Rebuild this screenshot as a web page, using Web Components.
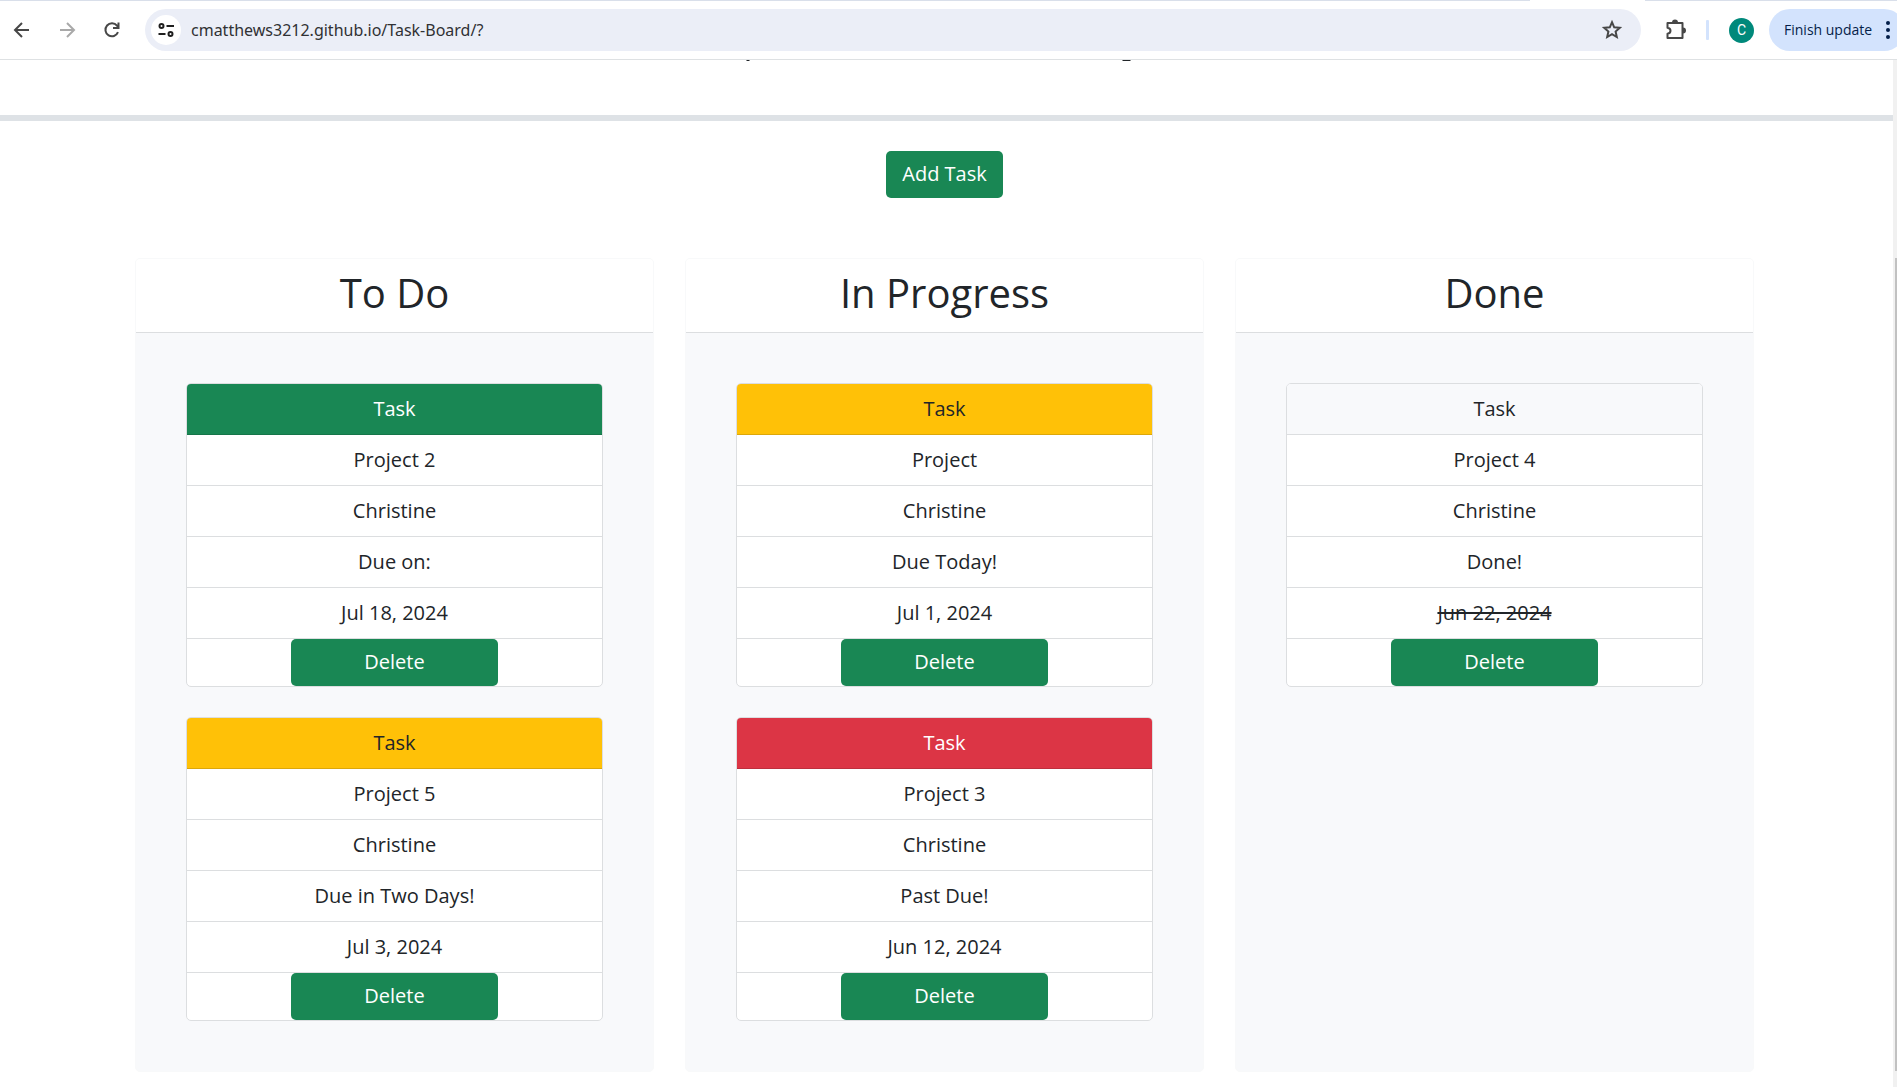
<!DOCTYPE html>
<html lang="en">
<head>
<meta charset="utf-8">
<title>Task Board</title>
<style>
  html, body { margin: 0; height: 100%; }
  body {
    display: flex; flex-direction: column; overflow: hidden; background: #fff; color: #212529;
    font: 20px/30px "Open Sans", "Noto Sans", sans-serif;
  }
</style>
</head>
<body>
<browser-bar url="cmatthews3212.github.io/Task-Board/?"></browser-bar>
<page-view>
  <board-header></board-header>
  <task-board>
    <task-lane heading="To Do">
      <task-card tone="success" name="Project 2" owner="Christine" status="Due on:" due="Jul 18, 2024"></task-card>
      <task-card tone="warning" name="Project 5" owner="Christine" status="Due in Two Days!" due="Jul 3, 2024"></task-card>
    </task-lane>
    <task-lane heading="In Progress">
      <task-card tone="warning" name="Project" owner="Christine" status="Due Today!" due="Jul 1, 2024"></task-card>
      <task-card tone="danger" name="Project 3" owner="Christine" status="Past Due!" due="Jun 12, 2024"></task-card>
    </task-lane>
    <task-lane heading="Done">
      <task-card tone="light" name="Project 4" owner="Christine" status="Done!" due="Jun 22, 2024"></task-card>
    </task-lane>
  </task-board>
</page-view>
<script>
  class Base extends HTMLElement {
    connectedCallback() {
      if (this.shadowRoot) return;
      this.attachShadow({ mode: 'open' }).innerHTML =
        `<style>*{box-sizing:border-box}button,input{font:inherit;border:0;margin:0}${this.css()}</style>${this.html()}`;
    }
    at(name) { return this.getAttribute(name) || ''; }
  }

  customElements.define('browser-bar', class extends Base {
    css() { return `
      :host { display: block; flex: none; overflow: hidden; border-bottom: 1px solid #dee1e3; }
      .tabs { display: grid; grid-template-columns: 1530fr 115fr 252fr; height: 1px; }
      .tabs i { background: #d9dfea; }
      .tabs i:nth-child(2) { background: #fff; }
      .bar { display: flex; align-items: center; height: 58px; padding-left: 10px; }
      button { background: none; padding: 0; flex: none; display: flex; align-items: center; justify-content: center; }
      svg { display: block; flex: none; }
      .nav { width: 24px; height: 24px; margin-right: 21px; color: #474747; }
      .nav.off { color: #a9a9a9; }
      .omni { flex: 1; min-width: 0; height: 42px; border-radius: 21px; background: #ebeef7; display: flex; align-items: center; padding: 0 18px 0 6px; }
      .site { width: 30px; height: 30px; border-radius: 50%; background: #fff; color: #1f1f1f; }
      input { flex: 1; min-width: 0; background: none; outline: 0; color: #303134; padding: 0 0 0 10px; font: 16px/24px "Noto Sans", sans-serif; }
      .star { color: #474747; }
      .ext { margin-left: 23px; color: #474747; }
      .sep { width: 3px; height: 20px; border-radius: 1px; background: #d3e3fd; margin: 0 20px; flex: none; }
      .me { width: 25px; height: 25px; border-radius: 50%; background: #00897b; color: #fff; font: 14px/25px Roboto, sans-serif; }
      .upd { margin: 0 -8px 0 15px; width: 136px; height: 42px; border-radius: 21px; background: #d3e3fd; color: #041e49; font-size: 14px; justify-content: space-between; padding: 0 15px; }
      `; }
    html() { return `
      <div class="tabs"><i></i><i></i><i></i></div>
      <div class="bar">
        <button class="nav" aria-label="Back"><svg width="24" height="24" fill="none" stroke="currentColor" stroke-width="2"><path d="M19 12H6M12 5l-7 7 7 7"/></svg></button>
        <button class="nav off" aria-label="Forward"><svg width="24" height="24" fill="none" stroke="currentColor" stroke-width="2"><path d="M5 12h13M12 5l7 7-7 7"/></svg></button>
        <button class="nav" aria-label="Reload"><svg width="24" height="24" fill="none" stroke="currentColor" stroke-width="2"><path d="M18 14.2A6.5 6.5 0 1 1 17 7.7L18.5 9.6M18.5 4.5v5.5H13"/></svg></button>
        <div class="omni">
          <button class="site" aria-label="View site information"><svg width="18" height="18" fill="none" stroke="currentColor" stroke-width="2"><circle cx="4.5" cy="5" r="2"/><path d="M9.5 5H17M1.500 13H8.500"/><circle cx="13.500" cy="13" r="2"/></svg></button>
          <input aria-label="Address" value="${this.at('url')}">
          <button class="star" aria-label="Bookmark this tab"><svg width="22" height="22" fill="none" stroke="currentColor" stroke-width="2"><path d="M11 3.200l2.200 5.100 5.600.5-4.200 3.700 1.200 5.500-4.800-2.900-4.800 2.900 1.200-5.500-4.200-3.700 5.600-.5z"/></svg></button>
        </div>
        <button class="ext" aria-label="Extensions"><svg width="22" height="22"><path fill="none" stroke="currentColor" stroke-width="2" stroke-linejoin="round" d="M3.500 4h15v15h-15v-4.200c4-.6 4-5.400 0-6z"/><path fill="currentColor" d="M8 3.500a3 3 0 0 1 6 0zM19 8.500a3 3 0 0 1 0 6z"/></svg></button>
        <span class="sep"></span>
        <button class="me" aria-label="Profile">C</button>
        <button class="upd"><span>Finish update</span><svg width="4" height="20" fill="currentColor"><circle cx="2" cy="3" r="2"/><circle cx="2" cy="10" r="2"/><circle cx="2" cy="17" r="2"/></svg></button>
      </div>`; }
  });

  customElements.define('page-view', class extends Base {
    css() { return `
      :host { display: flex; flex: 1; min-height: 0; }
      main { flex: 1; min-width: 0; overflow: hidden; }
      .track { width: 4px; background: #f1f1f1; display: grid; grid-template-rows: 198fr 813fr 16fr; padding-left: 2px; }
      .thumb { grid-row: 2; background: #c1c1c1; }`; }
    html() { return `<main><slot></slot></main><div class="track"><div class="thumb"></div></div>`; }
  });

  customElements.define('board-header', class extends Base {
    css() { return `
      :host { display: block; height: 61px; box-sizing: border-box; padding-right: 4px; border-bottom: 6px solid #dee2e6; }
      svg { display: block; margin: 0 auto; }`; }
    /* descender tips of the subtitle, which is scrolled out of view */
    html() { return `<svg width="400" height="1" fill="#212529" aria-hidden="true"><path d="M1.500 0h3v1h-3zM377.500 0h8v1h-8z"/></svg>`; }
  });

  customElements.define('task-board', class extends Base {
    css() { return `
      :host { display: block; padding: 30px 4px 0 0; text-align: center; }
      .add { display: block; margin: 0 auto 60px; height: 47px; padding: 0 16px 1px; border-radius: 5px; background: #198754; color: #fff; }
      .lanes { display: grid; grid-template-columns: repeat(3, minmax(0, 1fr)); gap: 31px; max-width: 1651px; margin: 0 auto; padding: 0 16px; }`; }
    html() { return `<button class="add">Add Task</button><div class="lanes"><slot></slot></div>`; }
  });

  customElements.define('task-lane', class extends Base {
    css() { return `
      :host { display: block; border: 1px solid #f8f9fa; border-radius: 5px; background: #f8f9fb; overflow: hidden; }
      header { background: #fff; border-bottom: 1px solid #dcdee0; padding: 10px 20px 15px; }
      h2 { margin: 0; font-size: 40px; line-height: 48px; font-weight: 400; }
      .body { display: flex; flex-direction: column; gap: 30px; padding: 50px; }`; }
    html() { return `<header><h2>${this.at('heading')}</h2></header><div class="body"><slot></slot></div>`; }
  });

  customElements.define('task-card', class extends Base {
    css() { return `
      :host { display: block; border: 1px solid #dcdee0; border-radius: 5px; background: #fff; overflow: hidden; }
      h3, p { margin: 0; font-size: 20px; line-height: 30px; font-weight: 400; padding: 10px 20px; border-bottom: 1px solid #dcdee0; }
      h3 { background: #f8f9fb; }
      :host([tone=success]) h3 { background: #198754; border-color: #167549; color: #fff; }
      :host([tone=warning]) h3 { background: #ffc107; border-color: #dca70a; }
      :host([tone=danger]) h3 { background: #dc3545; border-color: #be2f3d; color: #fff; }
      :host([tone=light]) .due { text-decoration: line-through; }
      button { display: block; width: 50%; height: 47px; margin: 0 auto; padding: 0 16px 1px; border-radius: 5px; background: #198754; color: #fff; }`; }
    html() { return `<h3>Task</h3><p>${this.at('name')}</p><p>${this.at('owner')}</p><p>${this.at('status')}</p><p class="due">${this.at('due')}</p><button>Delete</button>`; }
  });
</script>
</body>
</html>
